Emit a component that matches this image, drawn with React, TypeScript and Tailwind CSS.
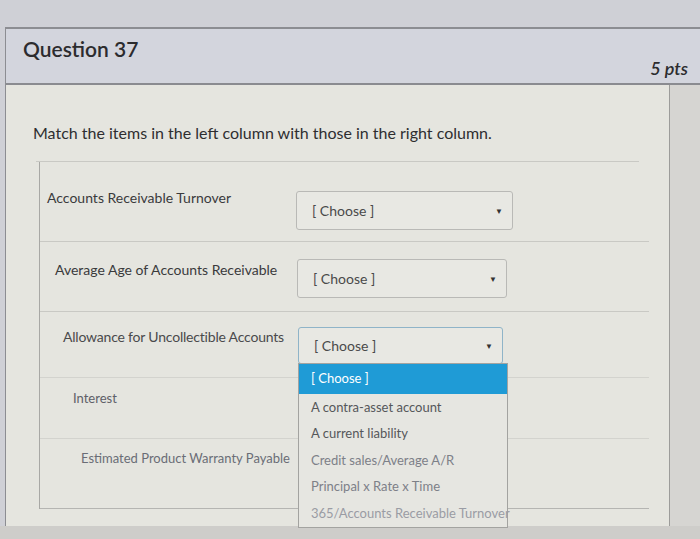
import React from 'react';

const font = { fontFamily: 'Lato, "Open Sans", sans-serif' };

const SelectBox = ({ open = false, width }: { open?: boolean; width: string }) => (
    <div
        className={`flex h-full items-center justify-between rounded-[3px] border bg-[#e8e8e3] pl-[15px] pr-[9px] ${width} ${open ? 'border-[#8fb4c8]' : 'border-[#b9b9b6]'}`}
    >
        <span className="text-[14px] text-[#4a4a4a]">[ Choose ]</span>
        <span className="text-[8px] text-[#333]">▼</span>
    </div>
);

const options = [
    'A contra-asset account',
    'A current liability',
    'Credit sales/Average A/R',
    'Principal x Rate x Time',
    '365/Accounts Receivable Turnover',
];

export default function App() {
    return (
        <div className="h-[539px] w-[700px] overflow-hidden bg-[#cfd0d6] pt-[27px]" style={font}>
            <div className="ml-[5px] border-t-2 border-l border-[#8c8d92]">
                {/* Header */}
                <div className="flex h-[56px] justify-between border-b-2 border-[#8a8b90] bg-[#d3d5dd] pl-[17px] pr-[12px]">
                    <h2 className="pt-[6px] text-[21px] font-semibold leading-[28px] text-[#2c2c2e]">Question 37</h2>
                    <span className="pt-[27px] text-[18px] italic font-semibold leading-[24px] text-[#2c2c2e]">5 pts</span>
                </div>

                {/* Body */}
                <div className="flex">
                    <div className="h-[441px] w-[664px] border-r border-[#9c9c9a] bg-[#e5e5df]">
                        <p className="pt-[37px] pl-[27px] text-[16px] leading-[22px] text-[#2e2e30]">
                            Match the items in the left column with those in the right column.
                        </p>
                        <div className="mx-[30px] mt-[17px] border-t border-[#c9c9c4]" />

                        <div className="relative ml-[33px] mr-[20px] border-l border-[#a8a8a5]">
                            {/* Row 1 */}
                            <div className="flex h-[80px] border-b border-[#c9c9c4]">
                                <span className="w-[256px] pt-[25px] pl-[7px] text-[14px] text-[#3a3a3c]">Accounts Receivable Turnover</span>
                                <div className="mt-[29px] h-[39px]">
                                    <SelectBox width="w-[217px]" />
                                </div>
                            </div>
                            {/* Row 2 */}
                            <div className="flex h-[70px] border-b border-[#c9c9c4]">
                                <span className="w-[257px] pt-[17px] pl-[15px] text-[14px] text-[#3a3a3c]">Average Age of Accounts Receivable</span>
                                <div className="mt-[17px] h-[39px]">
                                    <SelectBox width="w-[210px]" />
                                </div>
                            </div>
                            {/* Row 3 */}
                            <div className="flex h-[66px] border-b border-[#d3d3ce]">
                                <span className="w-[258px] shrink-0 pt-[14px] pl-[23px] text-[14px] tracking-[-0.2px] text-[#4a4a4c] whitespace-nowrap">Allowance for Uncollectible Accounts</span>
                                <div className="relative mt-[15px] h-[37px]">
                                    <SelectBox open width="w-[205px]" />
                                    <ul className="absolute top-[36px] left-0 z-10 w-[210px] border border-[#a3a3a0] bg-[#e6e6e1] text-[13px]">
                                        <li className="flex h-[30px] items-center bg-[#1f9bd6] pl-[12px] text-white">[ Choose ]</li>
                                        {options.map((o, i) => (
                                            <li
                                                key={o}
                                                className={`flex h-[26.5px] items-center pl-[12px] whitespace-nowrap ${i < 2 ? 'text-[#55575a]' : i < 4 ? 'text-[#7d8088]' : 'text-[#9a9ca4]'}`}
                                            >
                                                {o}
                                            </li>
                                        ))}
                                    </ul>
                                </div>
                            </div>
                            {/* Row 4 */}
                            <div className="flex h-[61px] border-b border-[#d3d3ce]">
                                <span className="pt-[11px] pl-[33px] text-[13px] text-[#5e6068]">Interest</span>
                            </div>
                            {/* Row 5 */}
                            <div className="flex h-[70px] border-b border-[#b5b5b2]">
                                <span className="pt-[10px] pl-[41px] text-[13px] text-[#6a6d76]">Estimated Product Warranty Payable</span>
                            </div>
                        </div>
                    </div>
                    <div className="flex-1 bg-[#d6d5d2]" />
                </div>
            </div>
            <div className="h-[40px] bg-[#cecdca]" />
        </div>
    );
}
